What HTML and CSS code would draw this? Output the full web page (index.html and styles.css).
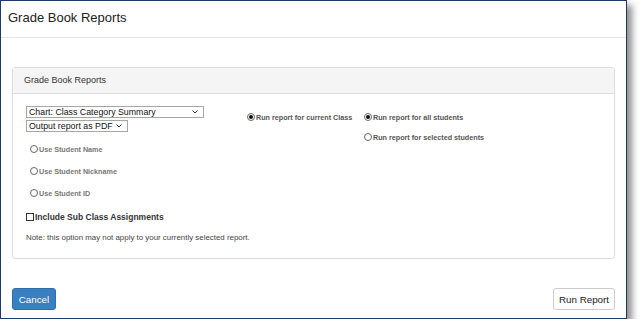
FILE: index.html
```html
<!DOCTYPE html>
<html lang="en">
<head>
  <meta charset="UTF-8" />
  <meta name="viewport" content="width=device-width, initial-scale=1.0"/>
  <title>Grade Book Reports</title>
  <link rel="stylesheet" href="styles.css">
</head>
<body>
  <div class="dialog">
    <div class="dialog-header">Grade Book Reports</div>

    <div class="dialog-body">
      <div class="panel">
        <div class="panel-heading">Grade Book Reports</div>
        <div class="panel-body">
          <div class="col-left">
            <div class="select select-wide">
              <span>Chart: Class Category Summary</span>
              <svg class="chev" width="6" height="4" viewBox="0 0 6 4"><path d="M0.5 0.5 L3 3 L5.5 0.5" fill="none" stroke="#333" stroke-width="1"/></svg>
            </div>
            <div class="select select-narrow">
              <span>Output report as PDF</span>
              <svg class="chev" width="6" height="4" viewBox="0 0 6 4"><path d="M0.5 0.5 L3 3 L5.5 0.5" fill="none" stroke="#333" stroke-width="1"/></svg>
            </div>

            <div class="name-options">
              <label class="radio light"><span class="dot"></span>Use Student Name</label>
              <label class="radio light"><span class="dot"></span>Use Student Nickname</label>
              <label class="radio light"><span class="dot"></span>Use Student ID</label>
            </div>

            <label class="check"><span class="box"></span>Include Sub Class Assignments</label>
            <p class="note">Note: this option may not apply to your currently selected report.</p>
          </div>

          <div class="col-class">
            <label class="radio"><span class="dot on"></span>Run report for current Class</label>
          </div>

          <div class="col-students">
            <label class="radio"><span class="dot on"></span>Run report for all students</label>
            <label class="radio"><span class="dot"></span>Run report for selected students</label>
          </div>
        </div>
      </div>
    </div>

    <div class="dialog-footer">
      <button class="btn btn-primary">Cancel</button>
      <button class="btn btn-default">Run Report</button>
    </div>
  </div>
</body>
</html>
```

FILE: styles.css
```css
body {
  font-family: 'Liberation Sans', Arial, sans-serif;
  background: #fff;
  margin: 0;
  padding: 0;
}
.dialog {
  width: 625px;
  height: 317px;
  border: 1px solid #1d3a63;
  background: #fff;
  box-shadow: 5px 5px 7px rgba(0, 0, 0, 0.45);
  display: flex;
  flex-direction: column;
}
.dialog-header {
  height: 36px;
  line-height: 34px;
  padding-left: 7px;
  font-size: 13px;
  color: #222;
  border-bottom: 1px solid #e5e5e5;
}
.dialog-body {
  padding: 29px 11px 0 11px;
}
.panel {
  height: 190px;
  border: 1px solid #dddddd;
  border-radius: 3px;
}
.panel-heading {
  height: 25px;
  line-height: 25px;
  padding-left: 11px;
  font-size: 9px;
  color: #333;
  background: #f5f5f5;
  border-bottom: 1px solid #dddddd;
}
.panel-body {
  display: flex;
  padding: 12px 13px 0 13px;
}
.col-left {
  width: 177px;
  display: flex;
  flex-direction: column;
  align-items: flex-start;
}
.select {
  height: 10px;
  border: 1px solid #a6a6a6;
  display: flex;
  align-items: center;
  justify-content: space-between;
  padding: 0 5px 0 2px;
  font-size: 8.8px;
  color: #111;
  background: #fff;
}
.select-wide {
  width: 169px;
}
.select-narrow {
  width: 93px;
  margin-top: 2px;
}
.chev {
  display: block;
}
.name-options {
  display: flex;
  flex-direction: column;
  gap: 10px;
  margin-top: 11px;
  padding-left: 4px;
}
.radio {
  display: flex;
  align-items: center;
  height: 12px;
  font-size: 7.2px;
  font-weight: bold;
  color: #555;
  white-space: nowrap;
}
.radio.light {
  color: #777;
}
.dot {
  width: 6px;
  height: 6px;
  border: 1px solid #666;
  border-radius: 50%;
  margin-right: 1px;
  display: flex;
  align-items: center;
  justify-content: center;
}
.dot.on::after {
  content: "";
  width: 4px;
  height: 4px;
  border-radius: 50%;
  background: #111;
}
.check {
  display: flex;
  align-items: center;
  height: 12px;
  margin-top: 12px;
  font-size: 8.5px;
  font-weight: bold;
  color: #333;
  white-space: nowrap;
}
.box {
  width: 6px;
  height: 6px;
  border: 1px solid #333;
  margin-right: 1px;
}
.note {
  margin: 10px 0 0 0;
  font-size: 7.9px;
  color: #444;
  white-space: nowrap;
}
.col-class {
  margin-left: 44px;
  width: 117px;
  padding-top: 5px;
}
.col-students {
  padding-top: 5px;
  display: flex;
  flex-direction: column;
  gap: 8px;
}
.dialog-footer {
  display: flex;
  justify-content: space-between;
  padding: 29px 11px 0 11px;
}
.btn {
  box-sizing: border-box;
  height: 22px;
  font-family: 'Liberation Sans', Arial, sans-serif;
  font-size: 9.8px;
  border-radius: 3px;
  padding: 0;
  white-space: nowrap;
  cursor: pointer;
}
.btn-primary {
  width: 44px;
  background: #3a7fc0;
  border: 1px solid #2f6ea8;
  color: #fff;
}
.btn-default {
  width: 62px;
  background: #fff;
  border: 1px solid #cccccc;
  color: #222;
}
```
